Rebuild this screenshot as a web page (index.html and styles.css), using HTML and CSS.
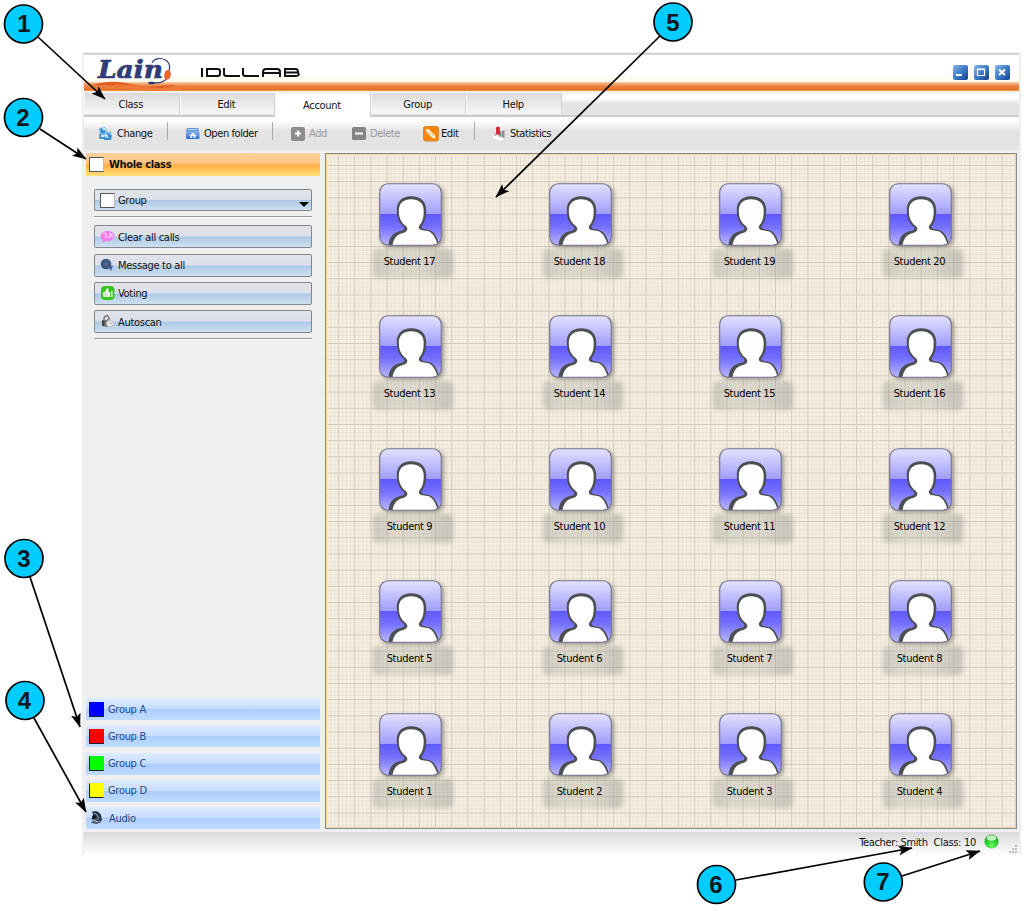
FILE: index.html
```
<!DOCTYPE html>
<html lang="en">
<head>
<meta charset="utf-8">
<title>Lain IDLLAB</title>
<link rel="stylesheet" href="styles.css">
</head>
<body>
<svg class="defs" width="0" height="0">
  <defs>
    <linearGradient id="tile" x1="0" y1="0" x2="0" y2="1">
      <stop offset="0" stop-color="#e3e2fe"/><stop offset=".49" stop-color="#a09dfa"/>
      <stop offset=".5" stop-color="#5f59fc"/><stop offset=".7" stop-color="#7570fd"/><stop offset="1" stop-color="#b9b8ff"/>
    </linearGradient>
    <linearGradient id="win" x1="0" y1="0" x2="1" y2="1">
      <stop offset="0" stop-color="#84b7e4"/><stop offset=".5" stop-color="#3e7ec6"/><stop offset="1" stop-color="#103d96"/>
    </linearGradient>
    <linearGradient id="folder" x1="0" y1="0" x2="0" y2="1">
      <stop offset="0" stop-color="#8cb7ed"/><stop offset="1" stop-color="#2f6bd6"/>
    </linearGradient>
    <radialGradient id="led" cx=".5" cy=".8" r=".8">
      <stop offset="0" stop-color="#6dff68"/><stop offset=".55" stop-color="#22c928"/><stop offset="1" stop-color="#3a9a40"/>
    </radialGradient>
    <clipPath id="tileclip"><rect x="1" y="1" width="60" height="60" rx="8"/></clipPath>
    <symbol id="student" viewBox="0 0 62 62">
      <rect x=".7" y=".7" width="60.6" height="60.6" rx="8.5" fill="url(#tile)"/>
      <g clip-path="url(#tileclip)">
        <path d="M9 63C10 54 13 49 20 47.500C24 46.500 26 46 24.500 43C19 39 17.500 33 17.500 26C17.500 18 23 13 31.500 13C41 13 46.500 18 46.500 27C46.500 34 45 39 41.500 43L43 45L50 46.500C56 49 58 56 60 63Z" fill="#4b4f52"/>
        <path d="M13 63C14 55 17 51 23 49.500C28 48.500 29.500 45 26 42C21 38 19.500 33 19.500 27C19.500 20 24 16 31.500 16C39.500 16 44 20 44 27C44 34 43 38 39.500 42C38.500 44.500 40 46 43 46.500L49 47.500C54 50 56 55 58.500 63Z" fill="#fff"/>
      </g>
      <rect x=".7" y=".7" width="60.6" height="60.6" rx="8.500" fill="none" stroke="#77768c" stroke-width="1.100"/>
    </symbol>
  </defs>
</svg>

<main class="window">
  <header class="titlebar">
    <svg class="brand" width="240" height="38" viewBox="0 0 240 38">
      <path d="M8 31C25 25 38 26 53 30S78 30 94 30C70 36 56 35 45 33S23 29 8 31Z" fill="#e45a20"/>
      <path d="M30 30C45 28 62 34 92 33L110 31C88 38 55 37 30 30Z" fill="#ed7a38"/>
      <text class="logo" x="16" y="23" textLength="65" lengthAdjust="spacingAndGlyphs">Lain</text>
      <path d="M70 8C72 3 80 2 85 6C89 10 88 14 86.500 18M85 23C82 28 77 28 69 28" fill="none" stroke="#343e78" stroke-width="1.200"/>
      <ellipse cx="85.500" cy="20" rx="3.200" ry="4.800" fill="#ed642b" transform="rotate(12 86 20)"/>
      <ellipse cx="69.500" cy="28" rx="3.500" ry="1.300" fill="#29366f"/>
      <g class="wordmark" fill="none" stroke="#111" stroke-width="2" transform="translate(0 -2)">
        <path d="M120 15V24M124 16H135.500Q138 16 138 18V21Q138 23 135.500 23H125V17M142 15V21Q142 23 144.500 23H158M161 15V21Q161 23 163.500 23H177M181 24V19Q181 16 184 16H195Q198 16 198 19V24M181 20H198M202 16H214Q216 16 216 19.500Q218 23 214 23H203V16M203 19.500H216"/>
      </g>
    </svg>
    <div class="winbtns">
      <svg width="15" height="15"><rect width="15" height="15" rx="2" fill="url(#win)"/><path d="M3 10H9" stroke="#fff" stroke-width="2"/></svg>
      <svg width="15" height="15"><rect width="15" height="15" rx="2" fill="url(#win)"/><path d="M3.500 4.500H10.500V10.500H3.500ZM3 4H11" fill="none" stroke="#fff" stroke-width="1.200"/></svg>
      <svg width="15" height="15"><rect width="15" height="15" rx="2" fill="url(#win)"/><path d="M4 4.500L10 10M10 4.500L4 10" stroke="#fff" stroke-width="2"/></svg>
    </div>
  </header>
  <div class="orange"></div>

  <nav class="tabs">
    <div class="tab">Class</div><div class="tab">Edit</div><div class="tab active">Account</div><div class="tab">Group</div><div class="tab">Help</div>
  </nav>

  <div class="toolbar">
    <div class="tool t-change">
      <svg width="16" height="16"><path d="M1 2L7 1L9 4V8L7 7V9H2Z" fill="#6eb4e5"/><path d="M6 7L13 5L14 14L6 14Z" fill="#83c3ef"/><path d="M3 3L4 6H7M2 8V12H6M9 8Q12 7 11 11M6 11L7 13H12L13 9" fill="none" stroke="#2677be" stroke-width="1.300"/><path d="M5 2L8 4M7 10L9 9" stroke="#e5f5ff" stroke-width="1.500"/></svg>Change</div>
    <i class="sep"></i>
    <div class="tool t-open">
      <svg width="16" height="16"><path d="M2 2H13L14 6H1Z" fill="#5b91df"/><path d="M3 3.500H12" stroke="#c6dcf7"/><rect x="1" y="5" width="13.500" height="8" rx="1" fill="url(#folder)"/><path d="M4 10L8 6.500L12 10H10.500V12H8.700V10H7.300V12H5.500V10Z" fill="#e6f1ff"/></svg>Open folder</div>
    <i class="sep"></i>
    <div class="tool t-add off">
      <svg width="16" height="16"><rect x="1" y="1" width="14" height="14" rx="2" fill="#8d8d8d"/><path d="M5 7.500H11M8 4.500V10.500" stroke="#fff" stroke-width="2"/></svg>Add</div>
    <div class="tool t-del off">
      <svg width="16" height="16"><rect x="1" y="1" width="14" height="13" rx="1.500" fill="#858585"/><path d="M4 7.500H12" stroke="#fff" stroke-width="2"/></svg>Delete</div>
    <div class="tool t-edit">
      <svg width="16" height="16"><rect x=".5" y=".5" width="15" height="14.500" rx="2" fill="#fa860b" stroke="#d78731"/><path d="M3 3L6 3.500L12 9.500L12.500 12.500L9.500 12L3.500 6Z" fill="#fff4df"/><path d="M5.500 5.500L10 10" stroke="#f3a950" stroke-width=".8"/></svg>Edit</div>
    <i class="sep"></i>
    <div class="tool t-stat">
      <svg width="16" height="16"><path d="M1 9L12 13L9 15L1 12Z" fill="#fff"/><path d="M7 6L9.500 5V11L7 10ZM10 5L12.500 4.500V12L10 11Z" fill="#8e8e92"/><path d="M4 1.500L6 .5L8 1.500V8L6 9L4 8Z" fill="#d62d38"/><path d="M3 7V10" stroke="#b9b9bb" stroke-width="1.500"/></svg>Statistics</div>
  </div>

  <section class="body">
    <aside class="side">
      <div class="whole"><i class="box"></i><b>Whole class</b></div>
      <div class="panel">
        <div class="btn"><i class="box"></i><span>Group</span><i class="caret"></i></div>
        <div class="rule"></div>
        <div class="btn"><svg width="16" height="14"><ellipse cx="7.500" cy="6" rx="7" ry="5.200" fill="#f67fea"/><path d="M3 9L2 13L7 10Z" fill="#f67fea"/><path d="M3 4Q5 2 6 4V8M9 4Q11 2 11 5L9 6V8M12 4V8" fill="none" stroke="#fde2fb"/></svg><span>Clear all calls</span></div>
        <div class="btn"><svg width="16" height="14"><circle cx="6" cy="6" r="5.300" fill="#3d5680"/><circle cx="6" cy="6" r="2" fill="#526a93"/><path d="M8 8L13 7.500L11 13L9 10Z" fill="#466194"/></svg><span>Message to all</span></div>
        <div class="btn"><svg width="16" height="16"><rect x="1" y="1" width="13.500" height="14" rx="4" fill="#37c51b"/><path d="M7 3L8.500 4V7H10V12H4L3 11V7H5Z M11 6H12.500V12H11Z" fill="#fff"/><path d="M4 9H8M4 11H8" stroke="#7dd36d" stroke-width=".7"/></svg><span>Voting</span></div>
        <div class="btn"><svg width="16" height="16"><path d="M4 7V4Q7-1 9 4V7" fill="none" stroke="#777" stroke-width="1.500"/><path d="M2 6L8 7V13L2 12Z" fill="#454545"/><path d="M5 7L8 5L9 9L7 13L4 12Z" fill="#777"/><circle cx="10" cy="9.500" r="3.500" fill="#ececec" stroke="#aaa" stroke-width=".7"/><path d="M10 9.500V7M10 9.500L12 10" stroke="#888" stroke-width=".6"/></svg><span>Autoscan</span></div>
        <div class="rule"></div>
      </div>
      <div class="groups">
        <div class="group"><i class="box blue"></i><span>Group A</span></div>
        <div class="group"><i class="box red"></i><span>Group B</span></div>
        <div class="group"><i class="box green"></i><span>Group C</span></div>
        <div class="group"><i class="box yellow"></i><span>Group D</span></div>
        <div class="group"><svg width="16" height="16"><path d="M3 2Q8-1 12 5L13 10L11 12L7 11Z" fill="#283447"/><path d="M5 3Q8 3 10 9" fill="none" stroke="#a7b8cb" stroke-width="1"/><path d="M2 8L9 8L12 12L8 14L2 13L4 11Z" fill="#4d596c"/><circle cx="5" cy="7" r="2" fill="#101824"/><path d="M4 10L9 12" stroke="#c1d0df"/></svg><span>Audio</span></div>
      </div>
    </aside>
    <div class="room">
      <div class="seat"><svg><use href="#student"/></svg><span>Student 17</span></div>
      <div class="seat"><svg><use href="#student"/></svg><span>Student 18</span></div>
      <div class="seat"><svg><use href="#student"/></svg><span>Student 19</span></div>
      <div class="seat"><svg><use href="#student"/></svg><span>Student 20</span></div>
      <div class="seat"><svg><use href="#student"/></svg><span>Student 13</span></div>
      <div class="seat"><svg><use href="#student"/></svg><span>Student 14</span></div>
      <div class="seat"><svg><use href="#student"/></svg><span>Student 15</span></div>
      <div class="seat"><svg><use href="#student"/></svg><span>Student 16</span></div>
      <div class="seat"><svg><use href="#student"/></svg><span>Student 9</span></div>
      <div class="seat"><svg><use href="#student"/></svg><span>Student 10</span></div>
      <div class="seat"><svg><use href="#student"/></svg><span>Student 11</span></div>
      <div class="seat"><svg><use href="#student"/></svg><span>Student 12</span></div>
      <div class="seat"><svg><use href="#student"/></svg><span>Student 5</span></div>
      <div class="seat"><svg><use href="#student"/></svg><span>Student 6</span></div>
      <div class="seat"><svg><use href="#student"/></svg><span>Student 7</span></div>
      <div class="seat"><svg><use href="#student"/></svg><span>Student 8</span></div>
      <div class="seat"><svg><use href="#student"/></svg><span>Student 1</span></div>
      <div class="seat"><svg><use href="#student"/></svg><span>Student 2</span></div>
      <div class="seat"><svg><use href="#student"/></svg><span>Student 3</span></div>
      <div class="seat"><svg><use href="#student"/></svg><span>Student 4</span></div>
    </div>
  </section>

  <footer class="status">
    <span class="teacher">Teacher: Smith</span><span class="class">Class: 10</span>
    <svg class="led" width="15" height="15"><circle cx="7.500" cy="7.500" r="7" fill="url(#led)"/><ellipse cx="7.500" cy="4" rx="4.700" ry="2.700" fill="#d9ffd7" opacity=".85"/></svg>
    <svg class="grip" width="8" height="8"><path d="M6 0h2v2h-2zM3 3h2v2h-2zM6 3h2v2h-2zM0 6h2v2h-2zM3 6h2v2h-2zM6 6h2v2h-2z" fill="#b9b9b9"/></svg>
  </footer>
</main>

<svg class="callouts" width="1024" height="911" viewBox="0 0 1024 911">
  <defs>
    <marker id="arrow" markerUnits="userSpaceOnUse" markerWidth="14" markerHeight="10" refX="13.500" refY="5" orient="auto"><path d="M0 0L14 5L0 10L3 5Z"/></marker>
  </defs>
  <g stroke="#000" stroke-width="1.700" marker-end="url(#arrow)">
    <path d="M38 37L105 99"/><path d="M40 129L86 159"/><path d="M30 577L80 727"/><path d="M34 718L86 812"/>
    <path d="M660 36L496 197"/><path d="M736 880L912 848"/><path d="M902 876L980 851"/>
  </g>
  <g fill="#0cf" stroke="#000" stroke-width="1.700">
    <circle cx="23.500" cy="24" r="19"/><circle cx="23.500" cy="117.500" r="19"/><circle cx="24" cy="558.500" r="19"/><circle cx="25" cy="700.500" r="19"/>
    <circle cx="673" cy="22" r="19"/><circle cx="716.500" cy="884.500" r="19"/><circle cx="883.300" cy="882" r="19"/>
  </g>
  <g class="nums">
    <text x="24" y="32">1</text><text x="23" y="126">2</text><text x="24" y="567">3</text><text x="24.500" y="709">4</text>
    <text x="673" y="30.500">5</text><text x="716" y="893">6</text><text x="883" y="890">7</text>
  </g>
</svg>
</body>
</html>
```
FILE: styles.css
```
* { box-sizing: border-box; }
body {
  margin: 0;
  width: 1024px;
  height: 911px;
  padding: 52px 0 0 82px;
  position: relative;
  overflow: hidden;
  background: #fff;
  font: 11px/14px "DejaVu Sans Condensed", "DejaVu Sans", sans-serif;
  font-stretch: condensed;
  letter-spacing: -.3px;
  color: #111;
}
svg { display: block; flex: none; }
.defs { position: absolute; }
.window {
  width: 939px;
  height: 802px;
  display: flex;
  flex-direction: column;
  background: #efefef;
  border: solid #efefef;
  border-width: 1px 2px 1px 2px;
}
.titlebar {
  height: 29px;
  border-top: 2px solid #d2d2d2;
  background: linear-gradient(#fff 65%, #fffbea);
  display: flex;
  justify-content: space-between;
  padding: 0 9px 0 0;
  flex: none;
}
.brand { margin: 0 0 0 -2px; position: relative; z-index: 1; }
.logo { font: italic bold 25px "DejaVu Serif", serif; fill: #303c76; stroke: #303c76; stroke-width: .7px; letter-spacing: 0; }
.winbtns { display: flex; gap: 6px; padding-top: 10px; }
.orange {
  height: 9px;
  flex: none;
  background: linear-gradient(#fbd7b5, #f3a66e 20%, #e9803f 50%, #e4732b 85%, #f9a343);
}
.tabs {
  height: 24px;
  margin-top: 2px;
  flex: none;
  display: flex;
  background: linear-gradient(#fff 20%, #e4e4e4 50%);
  border-bottom: 2px solid #cacaca;
}
.tab {
  width: 95.600px;
  height: 21px;
  padding-top: 5px;
  text-align: center;
  background: linear-gradient(#dadada, #e7e7e7 40%, #f7f7f7);
  border-right: 1px solid #d2d2d2;
  box-shadow: inset 1px 0 #f8f8f8;
  padding-right: 1px;
}
.tab.active { height: 24px; background: #fff; padding-top: 6px; }
.toolbar {
  height: 33px;
  flex: none;
  display: flex;
  align-items: flex-start;
  background: linear-gradient(#fff 10%, #f2f2f2 28%, #e3e3e3 42%);
  padding: 9px 0 0 14px;
}
.tool { display: flex; align-items: center; gap: 3px; height: 16px; white-space: nowrap; letter-spacing: -.42px; }
.tool.off { color: #9c9c9c; }
.t-change { width: 69px; }
.t-open { width: 87px; }
.t-add { width: 61px; }
.t-del { width: 72px; }
.t-edit { width: 34px; gap: 2px; }
.t-stat { gap: 2px; }
.sep { width: 1px; height: 18px; background: #a9a9a9; margin: -4px 17px 0 0; }
.t-edit + .sep { margin-left: 17px; }
.body { display: flex; flex: none; height: 679px; margin-top: 3px; }
.side { width: 241px; height: 677px; padding: 0 5px 1px 2px; display: flex; flex-direction: column; }
.whole {
  height: 23px;
  display: flex;
  align-items: center;
  gap: 5px;
  padding-left: 3px;
  background: linear-gradient(#ffd19d, #ffc685 40%, #ffb044 55%, #ffe178);
}
.whole b { letter-spacing: -.35px; padding-top: 1px; }
.box { width: 15px; height: 15px; border: 1px solid #565656; border-right-color: #bbb; background: #fff; flex: none; }
.panel { padding: 13px 8px 0 8px; }
.btn {
  height: 23px;
  margin-bottom: 5.300px;
  border: 1px solid #83878e;
  border-radius: 2px;
  display: flex;
  align-items: center;
  gap: 2px;
  padding-left: 5px;
  background: linear-gradient(#e2e2e9, #dce1ec 48%, #adc9e5 52%, #cfe0ef);
}
.btn span { padding-top: 2px; }
.group span { padding-top: 1px; }
.btn .box { margin-right: 1px; }
.btn:first-child { height: 22px; }
.caret { margin: 8px 2px 0 auto; border: 5px solid transparent; border-top-color: #000; border-bottom: 0; }
.rule { height: 2px; border-top: 1px solid #999; border-bottom: 1px solid #fff; margin-bottom: 7px; }
.groups { margin-top: auto; display: flex; flex-direction: column; gap: 5.200px; color: #24478b; }
.group {
  height: 22px;
  display: flex;
  align-items: center;
  gap: 4px;
  padding-left: 3px;
  background: linear-gradient(#deebff, #c6ddff 48%, #accfff 52%, #bfdbff);
}
.group .box { border-color: #152035; border-top-color: transparent; border-right-color: transparent; }
.blue { background: #00f; } .red { background: red; } .green { background: #0f0; } .yellow { background: #ff0; }
.room {
  width: 692px;
  height: 676px;
  border: 1px solid #8b8b8b;
  box-shadow: inset 1px 1px #ffd59b, inset -1px -1px #ecd3ad;
  padding: 28.500px 0 0 46px;
  display: grid;
  grid-template-columns: repeat(4, 170px);
  grid-auto-rows: 132.500px;
  background-color: #f5eee1;
  background-image:
    linear-gradient(90deg, #d2cbbf 1px, transparent 1px),
    linear-gradient(#d2cbbf 1px, transparent 1px),
    linear-gradient(90deg, #e8e1d4 1px, transparent 1px),
    linear-gradient(#e8e1d4 1px, transparent 1px);
  background-size: 16.200px 16.200px, 16.200px 16.200px, 4.050px 4.050px, 4.050px 4.050px;
  background-position: 12px 11px;
}
.seat { width: 81px; }
.seat svg { width: 63px; height: 63px; margin-left: 7px; filter: drop-shadow(2px 2px 2px rgba(80, 75, 70, .5)); }
.seat span {
  display: block;
  height: 30px;
  margin-top: 2px;
  padding: 7px 6px 0 0;
  text-align: center;
  position: relative;
  isolation: isolate;
  color: #000;
}
.seat span::before {
  content: "";
  position: absolute;
  z-index: -1;
  inset: 1px 0 0 1px;
  border-radius: 5px;
  background: linear-gradient(90deg, rgba(130, 130, 125, .33), rgba(155, 155, 150, .25) 22% 60%, rgba(130, 130, 125, .34) 92%);
  filter: blur(2px);
}
.status {
  height: 23px;
  flex: none;
  display: flex;
  align-items: flex-start;
  padding: 4px 2px 0 0;
  justify-content: flex-end;
  background: linear-gradient(#d9d9d9, #fbfbfb 90%);
}
.teacher { letter-spacing: -.35px; }
.class { margin-left: 6px; }
.led { margin: -2px 0 0 8px; }
.grip { margin: 9px 0 0 10px; }
.callouts { position: absolute; left: 0; top: 0; z-index: 2; }
.nums { font: bold 24px "Liberation Sans", Arial, sans-serif; letter-spacing: 0; text-anchor: middle; fill: #101820; }
```
